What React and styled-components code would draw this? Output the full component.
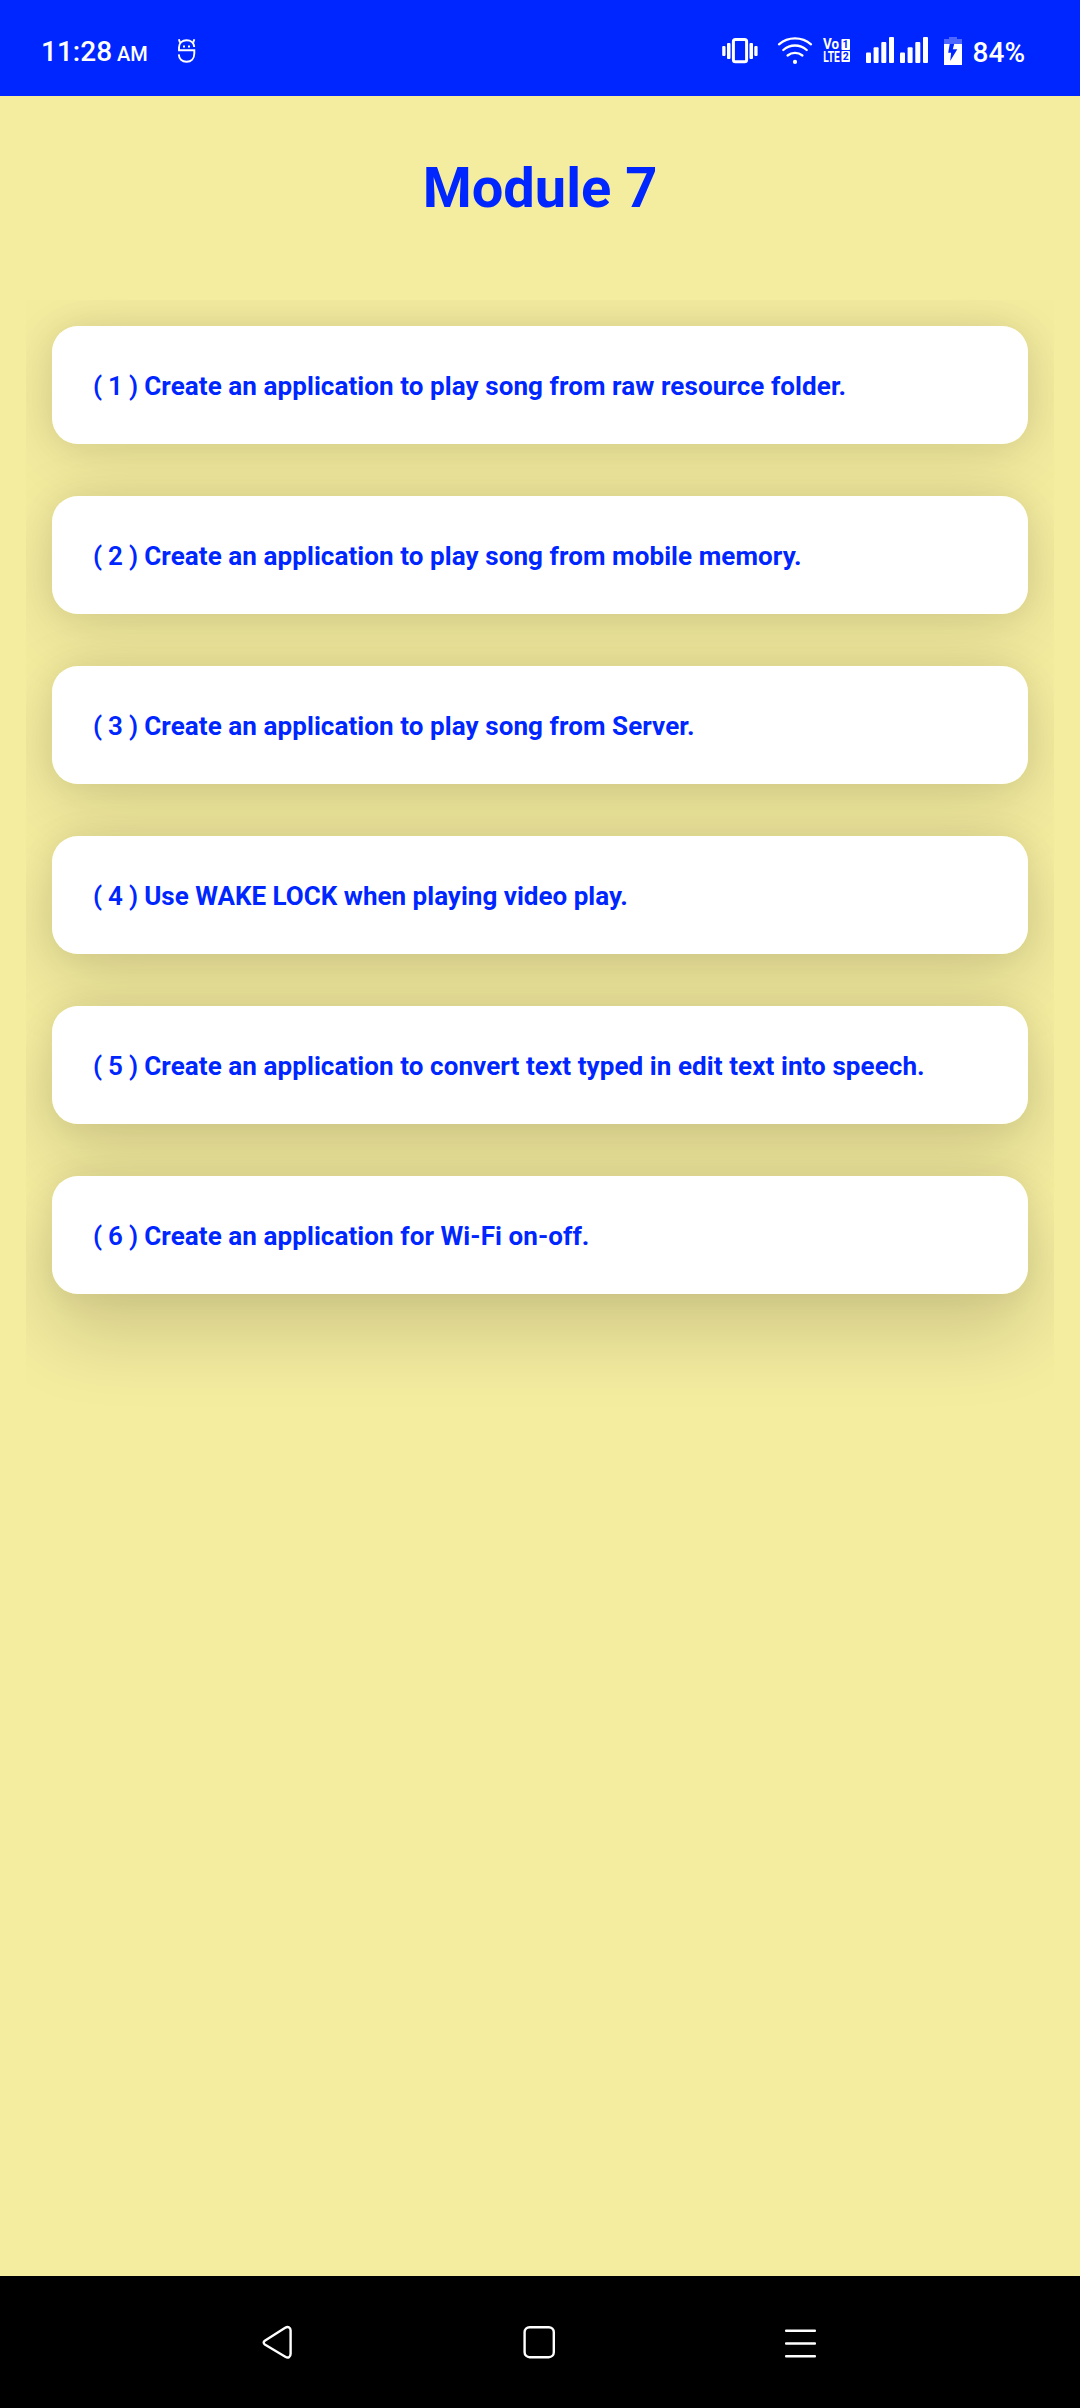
import React from "react";
import styled, { createGlobalStyle } from "styled-components";

const GlobalStyle = createGlobalStyle`
  *, *::before { box-sizing: border-box; }
  body { margin: 0; background: #f4ec9f; }
`;

const Screen = styled.div`
  display: flex;
  flex-direction: column;
  width: 1080px;
  height: 2408px;
  overflow: hidden;
  background: #f4ec9f;
  color: #0026ff;
  font-family: Roboto, "Liberation Sans", sans-serif;
`;

const StatusBar = styled.header`
  display: flex;
  flex: none;
  align-items: flex-start;
  justify-content: space-between;
  height: 96px;
  padding: 34px 55px 0 41px;
  background: #0026ff;
  color: #fff;
`;

const StatusGroup = styled.div`
  display: flex;
  align-items: flex-start;
  height: 40px;

  svg { flex: none; display: block; margin-top: 3px; overflow: visible; }
`;

const Clock = styled.span`
  font-size: 28px;
  font-weight: 500;
  line-height: 36px;
  white-space: nowrap;
`;

const Meridiem = styled.span`
  margin-left: 5px;
  font-size: 20px;
`;

const Percent = styled(Clock)`
  margin: 1px 0 0 11px;
`;

const Spacer = styled.span`
  flex: none;
  width: ${(p) => p.$w}px;
`;

const Title = styled.h1`
  flex: none;
  height: 204px;
  margin: 0;
  padding-top: 59px;
  font-size: 56px;
  font-weight: 700;
  line-height: 66px;
  text-align: center;
`;

const List = styled.ul`
  display: flex;
  flex: 1;
  flex-direction: column;
  gap: 52px;
  margin: 0 26px;
  padding: 26px;
  list-style: none;
  overflow: hidden;
  isolation: isolate;
`;

const Card = styled.li`
  position: relative;
  display: flex;
  flex: none;
  align-items: center;
  height: 118px;
  padding: 1px 41px 0;
  border-radius: 26px;
  background: #fff;
  font-size: 26px;
  font-weight: 700;
  line-height: 32px;
  letter-spacing: ${(p) => p.$tracking}px;
  white-space: pre;

  &::before {
    content: "";
    position: absolute;
    inset: 0;
    z-index: -1;
    border-radius: 26px;
    box-shadow:
      0 0 32px rgba(0, 0, 0, 0.08),
      0 ${(p) => 14 + p.$depth * 5}px 76px 3px rgba(0, 0, 0, ${(p) => 0.095 + p.$depth * 0.01});
  }
`;

const Ordinal = styled.span`
  font-weight: 600;
  letter-spacing: -0.2px;
`;

const NavBar = styled.nav`
  display: flex;
  flex: none;
  align-items: center;
  justify-content: space-between;
  height: 132px;
  padding: 0 260px;
  background: #000;
`;

const NavButton = styled.button`
  display: flex;
  margin: 0;
  padding: 0;
  border: 0;
  background: none;
`;

const NotificationIcon = () => (
  <svg width="20" height="27" viewBox="0 0 20 27" fill="none" stroke="#fff" strokeWidth="1.9">
    <path d="M3 5.600 1.900 2.300M16.200 5.600l1.100-3.300" />
    <path d="M17.200 10C16.900 5.600 13.700 3.200 9.600 3.200 5.200 3.200 2 6 2 10.600v2.600h15.300v3.400c0 4.900-3.100 8.100-7.700 8.100C5 24.700 2 21.800 1.800 17.400" />
    <path d="M6 9.600h2M11 9.600h2" strokeWidth="2" />
  </svg>
);

const VibrateIcon = () => (
  <svg width="36" height="28" viewBox="0 0 36 28" fill="#fff">
    <rect x="11.4" y="2.4" width="13.2" height="22.4" rx="2" fill="none" stroke="#fff" strokeWidth="3" />
    <rect x="5" y="6" width="3.5" height="16" rx="1" />
    <rect x="27.5" y="6" width="3.5" height="16" rx="1" />
    <rect x="0.2" y="9" width="3.3" height="10" rx="1" />
    <rect x="32.3" y="9" width="3.3" height="10" rx="1" />
  </svg>
);

const WifiIcon = () => (
  <svg width="36" height="28" viewBox="0 0 36 28" fill="none" stroke="#fff" strokeWidth="2.3" strokeLinecap="round">
    <path d="M2 7.300c9-8 23-8 32 0" />
    <path d="M6.300 13c6.800-6 16.600-6 23.400 0" />
    <path d="M10.600 18.500c4.300-3.600 10.500-3.600 14.800 0" />
    <circle cx="18" cy="24.900" r="2.100" fill="#fff" stroke="none" />
  </svg>
);

const SimLabel = styled.text`
  font-family: Roboto, "Liberation Sans", sans-serif;
  font-weight: 700;
`;

const VolteIcon = () => (
  <svg width="28" height="26" viewBox="0 0 28 26" fill="#fff">
    <SimLabel x="0" y="12" fontSize="14" textLength="16" lengthAdjust="spacingAndGlyphs">Vo</SimLabel>
    <SimLabel x="0.300" y="24.700" fontSize="14.500" textLength="16.500" lengthAdjust="spacingAndGlyphs">LTE</SimLabel>
    <rect x="18.500" y="2" width="8.500" height="11" rx="0.800" />
    <rect x="18.500" y="14" width="8.500" height="11" rx="0.800" />
    <SimLabel x="22.500" y="11.300" fontSize="10.500" textAnchor="middle" fill="#0026ff">1</SimLabel>
    <SimLabel x="22.700" y="23.300" fontSize="10.500" textAnchor="middle" fill="#0026ff">2</SimLabel>
  </svg>
);

const SignalIcon = () => (
  <svg width="28" height="26" viewBox="0 0 28 26" fill="#fff">
    <rect x="0" y="15.500" width="5" height="10.500" rx="1" />
    <rect x="7.600" y="10.300" width="5" height="15.700" rx="1" />
    <rect x="15.300" y="5" width="5" height="21" rx="1" />
    <rect x="23" y="0" width="5" height="26" rx="1" />
  </svg>
);

const BatteryIcon = () => (
  <svg width="18" height="28" viewBox="0 0 18 28" fill="#fff">
    <path d="M5 0h8v2h5v5H0V2h5z" opacity="0.3" />
    <path d="M0 7h18v21H0z" />
    <path d="M5.700 7h4.500L8.800 12.200h4.500L6.200 24l.9-8.200H4.200z" fill="#0026ff" />
  </svg>
);

const BackIcon = () => (
  <svg width="34" height="36" viewBox="0 0 34 36" fill="none" stroke="#fff" strokeWidth="2.400" strokeLinejoin="round">
    <path d="M4.800 16.700 25.200 3.800C28 2.100 30.600 3.300 30.600 6.600v23.200c0 3.400-2.400 4.700-5.300 3L4.800 20.500c-1.500-1-1.500-2.800 0-3.800z" />
  </svg>
);

const HomeIcon = () => (
  <svg width="32" height="34" viewBox="0 0 32 34" fill="none" stroke="#fff" strokeWidth="2.400">
    <rect x="1.600" y="2.200" width="29.200" height="30" rx="5" />
  </svg>
);

const MenuIcon = () => (
  <svg width="36" height="34" viewBox="0 0 36 34" fill="#fff">
    <rect x="1" y="4.600" width="31" height="2.400" rx="1" />
    <rect x="1" y="17.300" width="31" height="2.400" rx="1" />
    <rect x="1" y="30.100" width="31" height="2.400" rx="1" />
  </svg>
);

const exercises = [
  { text: "Create an application to play song from raw resource folder." },
  { text: "Create an application to play song from mobile memory." },
  { text: "Create an application to play song from Server." },
  { text: "Use WAKE LOCK when playing video play.", tracking: 0.01 },
  { text: "Create an application to convert text typed in edit text into speech." },
  { text: "Create an application for Wi-Fi on-off." },
];

export default function App() {
  return (
    <Screen>
      <GlobalStyle />
      <StatusBar>
        <StatusGroup>
          <Clock>
            11:28<Meridiem>AM</Meridiem>
          </Clock>
          <Spacer $w={29} />
          <NotificationIcon />
        </StatusGroup>
        <StatusGroup>
          <VibrateIcon />
          <Spacer $w={19} />
          <WifiIcon />
          <Spacer $w={10} />
          <VolteIcon />
          <Spacer $w={15} />
          <SignalIcon />
          <Spacer $w={6} />
          <SignalIcon />
          <Spacer $w={16} />
          <BatteryIcon />
          <Percent>84%</Percent>
        </StatusGroup>
      </StatusBar>
      <Title>Module 7</Title>
      <List>
        {exercises.map(({ text, tracking = 0.08 }, i) => (
          <Card key={text} $depth={i} $tracking={tracking}>
            <Ordinal>( {i + 1} ) </Ordinal>{text}
          </Card>
        ))}
      </List>
      <NavBar>
        <NavButton aria-label="Back"><BackIcon /></NavButton>
        <NavButton aria-label="Home"><HomeIcon /></NavButton>
        <NavButton aria-label="Recent apps"><MenuIcon /></NavButton>
      </NavBar>
    </Screen>
  );
}
